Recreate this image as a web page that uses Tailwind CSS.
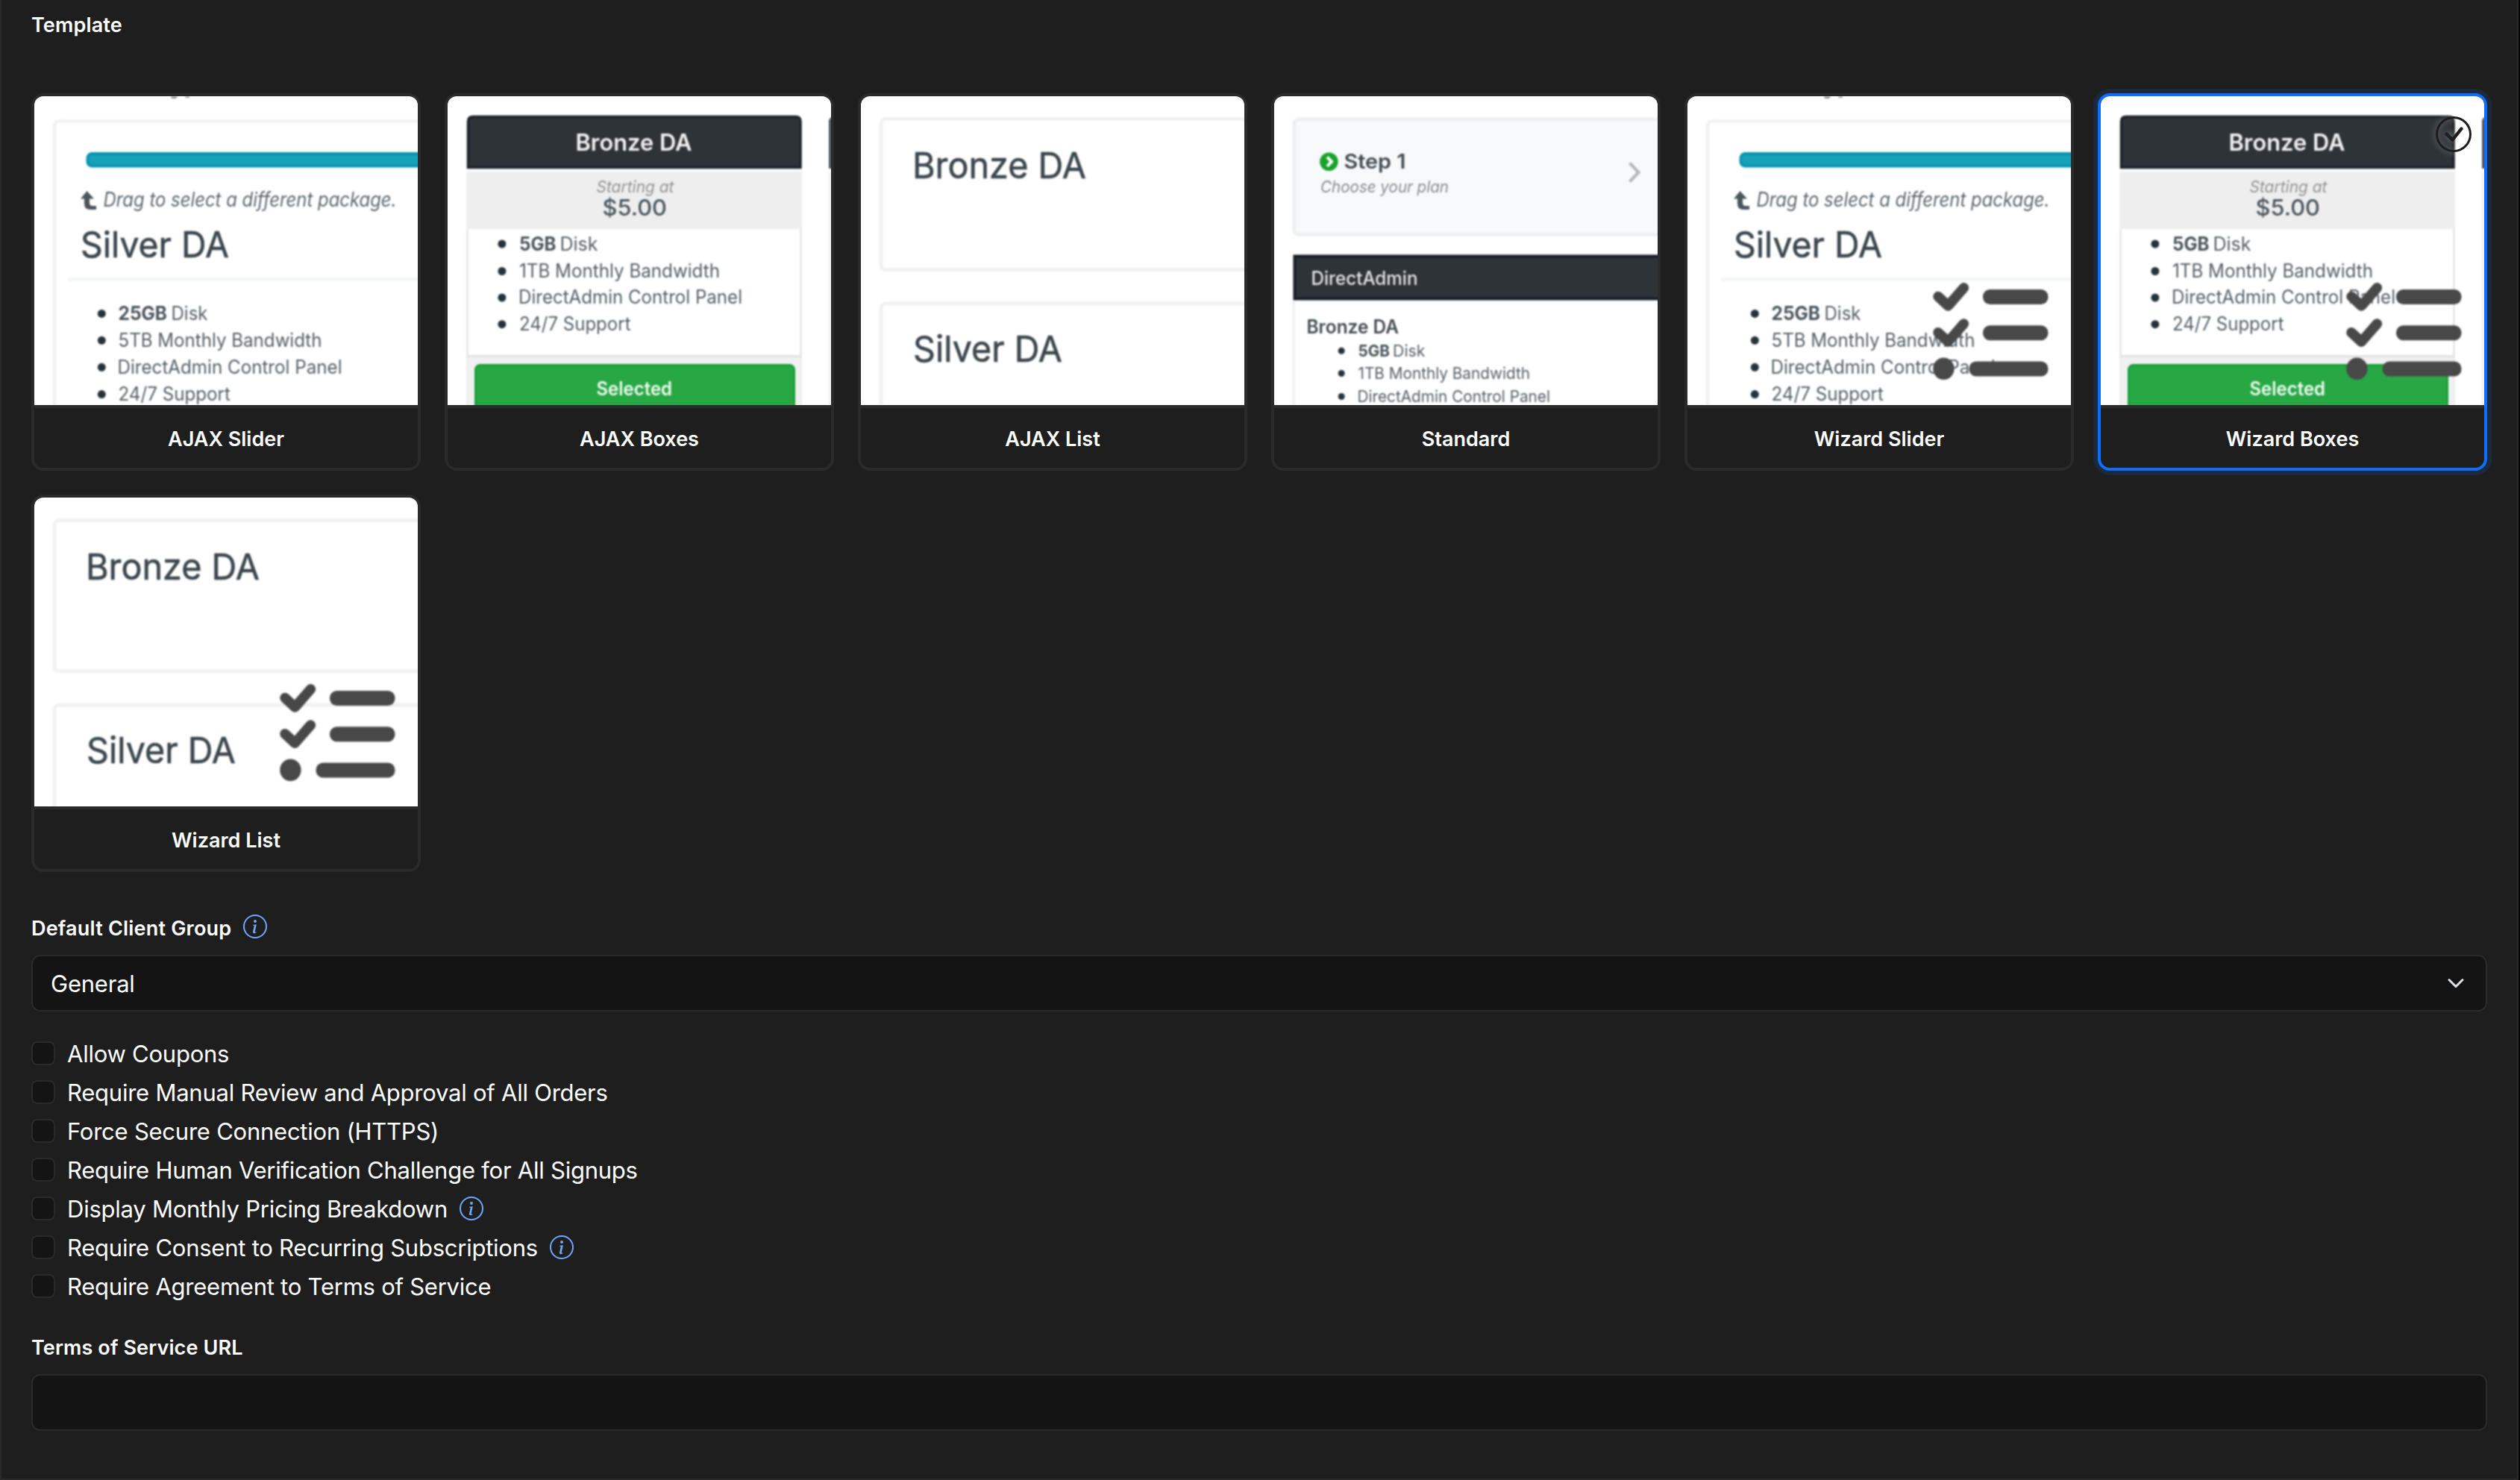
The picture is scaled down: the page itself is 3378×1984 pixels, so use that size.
<!DOCTYPE html>
<html lang="en">
<head>
    <meta charset="UTF-8">
    <meta name="viewport" content="width=device-width, initial-scale=1.0">
    <title>Order Form</title>
    <script src="https://cdn.jsdelivr.net/npm/@tailwindcss/browser@4"></script>
    <style>
        body {
            font-family: 'Inter', sans-serif;
        }
    </style>
</head>
<body class="bg-[#050505] text-white">
    <div class="w-[3376px] h-[1984px] px-10 pt-[13px] bg-[#1e1e1e] border-x-2 border-b-2 border-[#2a2a2a] overflow-hidden">
        <h2 class="text-[27px] leading-[42px] font-semibold tracking-[0.15px]">Template</h2>

        <div id="templates" class="grid grid-cols-6 gap-8 mt-[70px]"></div>

        <div class="flex items-center gap-4 mt-[55px] h-[42px]">
            <label for="group" class="text-[27px] leading-[42px] font-semibold tracking-[0.2px]">Default Client Group</label>
            <svg class="size-8 -mt-1.5 text-[#6ea8fe]" viewBox="0 0 16 16" fill="currentColor"><use href="#icon-info"/></svg>
        </div>
        <div id="group" class="flex items-center justify-between h-[76px] mt-3.5 pl-6 pr-[28px] rounded-xl border-2 border-[#2a2a2a] bg-[#141414]">
            <span class="pt-0.5 text-[31px] tracking-[-0.22px]">General</span>
            <svg class="size-6" viewBox="0 0 16 16" fill="none" stroke="#dee2e6" stroke-width="2" stroke-linecap="round" stroke-linejoin="round"><path d="m2 5 6 6 6-6"/></svg>
        </div>

        <div id="options" class="mt-[30px]"></div>

        <label for="tos" class="block mt-9 text-[27px] leading-[42px] font-semibold tracking-[0.12px]">Terms of Service URL</label>
        <input type="text" id="tos" class="block w-full h-[76px] mt-3.5 px-6 rounded-xl border-2 border-[#2a2a2a] bg-[#141414] text-[31px]">
    </div>

    <svg class="hidden">
        <symbol id="icon-info" viewBox="0 0 16 16">
            <path d="M8 15A7 7 0 1 1 8 1a7 7 0 0 1 0 14m0 1A8 8 0 1 0 8 0a8 8 0 0 0 0 16"/>
            <path d="m8.93 6.588-2.29.287-.082.38.45.083c.294.07.352.176.288.469l-.738 3.468c-.194.897.105 1.319.808 1.319.545 0 1.178-.252 1.465-.598l.088-.416c-.2.176-.492.246-.686.246-.275 0-.375-.193-.304-.533zM9 4.5a1 1 0 1 1-2 0 1 1 0 0 1 2 0"/>
        </symbol>
    </svg>

    <script>
        // one line of preview text, stretched to a fixed width
        const t = (x, y, w, size, text, extra = '') =>
            `<text x="${x}" y="${y}" font-size="${size}" textLength="${w}" lengthAdjust="spacingAndGlyphs" ${extra}>${text}</text>`;
        const dot = (x, y, r = 5.5) => `<circle cx="${x}" cy="${y}" r="${r}" fill="#26323a"/>`;

        const slider = `
            <path d="M183 0h9l-2 3h-6zM202 0h6v2h-5z" fill="#8b9398"/>
            <rect x="27" y="33.5" width="520" height="420" rx="6" fill="none" stroke="#f2f2f2" stroke-width="4.5"/>
            <rect x="71.5" y="77" width="480" height="16.5" rx="6" fill="#17a2b8" stroke="#0895b0" stroke-width="4"/>
            <path d="M62 137.5 70.5 127l9.5 10.5h-6V143q0 4 4 4h5v5h-8q-8 0-8-8v-6.5z" fill="#4a555c"/>
            ${t(92.5, 147.5, 393, 26.5, 'Drag to select a different package.', 'font-style="italic" fill="#5c676e"')}
            ${t(62, 216, 199, 48, 'Silver DA', 'fill="#3a454c" stroke="#3a454c" stroke-width=".6"')}
            <path d="M45 245.3h480" stroke="#f2f4f6" stroke-width="4.5"/>
            ${dot(90.3, 291.4)}${dot(90.3, 327.3)}${dot(90.3, 363.3)}${dot(90.3, 399.6)}
            ${t(112.5, 300, 65.5, 25.5, '25GB', 'font-weight="700" fill="#4a555c"')}
            ${t(183.5, 300, 49, 25.5, 'Disk')}
            ${t(112.5, 335.5, 273, 25.5, '5TB Monthly Bandwidth')}
            ${t(111.5, 371.5, 301, 25.5, 'DirectAdmin Control Panel')}
            ${t(112.5, 407.5, 150.5, 25.5, '24/7 Support')}`;

        const boxes = `
            <path d="M25 101h450v350H25z" fill="#eeeeee"/>
            <path d="M28 178h444v169H28z" fill="#fff"/>
            <path d="M25 178h3v169h-3zM472 178h3v169h-3z" fill="#e9e9eb"/>
            <path d="M26 347h448v3.5H26z" fill="#e4e4e6"/>
            <path d="M28 350.5h444v80H28z" fill="#f2f1f2"/>
            <path d="M25 97h450v4H25z" fill="#fff"/>
            <path d="M27.5 95.5V34q0-6.5 6.5-6.5h432.5q6.500 0 6.500 6.500v61.500z" fill="#2e3338" stroke="#1c232a" stroke-width="3.5"/>
            <path d="M511 97V32l3-4h20v69z" fill="#4c5359"/>
            <path d="M510.5 101h20v330h-20z" fill="#f3f3f4"/>
            ${t(171.5, 73.3, 156, 31.5, 'Bronze DA', 'font-weight="600" fill="#f1f1f1"')}
            ${t(199.5, 129, 104, 21.5, 'Starting at', 'font-style="italic" fill="#949494"')}
            ${t(207.5, 160, 86.5, 30.5, '$5.00', 'font-weight="500" fill="#4a555c"')}
            ${dot(72.9, 198)}${dot(72.9, 234.5)}${dot(72.9, 270)}${dot(72.9, 305.7)}
            ${t(96, 206.6, 49.5, 25, '5GB', 'font-weight="700" fill="#4a555c"')}
            ${t(150.5, 206.6, 51, 25, 'Disk')}
            ${t(96, 242.5, 269, 25, '1TB Monthly Bandwidth')}
            ${t(95, 278, 300, 25, 'DirectAdmin Control Panel')}
            ${t(96, 314.4, 149.5, 25, '24/7 Support')}
            <rect x="37.5" y="360.5" width="427" height="80" rx="6" fill="#28a745" stroke="#18a039" stroke-width="3"/>
            ${t(199.5, 400.8, 101.5, 25.5, 'Selected', 'font-weight="600" fill="#eefbef"')}`;

        const list = `
            <rect x="27" y="30.5" width="520" height="202" rx="6" fill="none" stroke="#f2f2f2" stroke-width="5"/>
            ${t(69, 109.6, 233, 48.5, 'Bronze DA', 'fill="#3a454c" stroke="#3a454c" stroke-width=".6"')}
            <rect x="27" y="278" width="520" height="202" rx="6" fill="none" stroke="#f2f2f2" stroke-width="5"/>
            ${t(70, 355.9, 200, 48.5, 'Silver DA', 'fill="#3a454c" stroke="#3a454c" stroke-width=".6"')}`;

        const standard = `
            <rect x="27" y="31" width="520" height="154.5" rx="6" fill="#f8f9fb" stroke="#eeeff1" stroke-width="5"/>
            <circle cx="73.4" cy="87.7" r="12.3" fill="#16a32a"/>
            <path d="m71 81.5 6 6.2-6 6.2" fill="none" stroke="#fff" stroke-width="4"/>
            ${t(93.5, 96.7, 83, 27.5, 'Step 1', 'font-weight="600" fill="#414b53"')}
            ${t(62, 129, 172, 22, 'Choose your plan', 'font-style="italic" fill="#878d92"')}
            <path d="m476.5 89.5 12 12.5-12 12.5" fill="none" stroke="#b5b7b9" stroke-width="4"/>
            <path d="M24.5 275h3.5v150h-3.5z" fill="#f0f1f3"/>
            <path d="M27.5 214.5h520v57h-520z" fill="#2e3338" stroke="#171e25" stroke-width="4"/>
            ${t(49.5, 253, 143, 25, 'DirectAdmin', 'font-weight="500" fill="#e6e6e6"')}
            ${t(43.5, 317.8, 123.5, 25, 'Bronze DA', 'font-weight="600" fill="#414b53"')}
            ${dot(90.2, 341.2, 4.5)}${dot(90.2, 371.5, 4.5)}${dot(90.2, 402.5, 4.5)}
            ${t(112.5, 348.5, 42.5, 22, '5GB', 'font-weight="700" fill="#4a555c"')}
            ${t(159, 348.5, 43.5, 22, 'Disk')}
            ${t(112.5, 379, 230.5, 22, '1TB Monthly Bandwidth')}
            ${t(111.5, 409.5, 258.5, 22, 'DirectAdmin Control Panel')}`;

        const wizard = `
            <g fill="none" stroke="#484848" stroke-width="13.5" stroke-linecap="round" stroke-linejoin="round">
                <path d="m336 268.5 13.4 12.5 21-24.2"/>
                <path d="m336 316.7 13.4 12.5 21-24.2"/>
            </g>
            <g fill="#484848">
                <rect x="396" y="259" width="87.5" height="20" rx="9.5"/>
                <rect x="396" y="307.3" width="87.5" height="20" rx="9.5"/>
                <rect x="377.5" y="355.5" width="106" height="20" rx="9.5"/>
                <ellipse cx="343.4" cy="365.3" rx="14.2" ry="14.8"/>
            </g>`;

        const templates = [
            { name: 'AJAX Slider', art: slider },
            { name: 'AJAX Boxes', art: boxes },
            { name: 'AJAX List', art: list },
            { name: 'Standard', art: standard },
            { name: 'Wizard Slider', art: slider + wizard },
            { name: 'Wizard Boxes', art: boxes + wizard, selected: true },
            { name: 'Wizard List', art: list + wizard },
        ];

        document.getElementById('templates').innerHTML = templates.map(item => `
            <div class="relative rounded-2xl border-4 ${item.selected ? 'border-[#0d6efd] ring-6 ring-[#0d6efd]/15' : 'border-[#2a2a2a]'}">
                <svg class="block w-full h-[414px] rounded-t-xl bg-white" viewBox="0 0 514 414" fill="#566168">
                    <g class="blur-[0.9px]">${item.art}</g>
                </svg>
                <div class="h-21 pt-px border-t-4 border-[#2a2a2a] text-center text-[27px] leading-[79px] font-semibold"><span class="inline-block pt-px">${item.name}</span></div>
                ${item.selected ? `
                <svg class="absolute top-[27px] right-[17px] size-12 drop-shadow-[0_0_4px_rgba(255,255,255,0.4)]" viewBox="0 0 16 16" fill="#1e1e1e">
                    <path d="M8 15A7 7 0 1 1 8 1a7 7 0 0 1 0 14m0 1A8 8 0 1 0 8 0a8 8 0 0 0 0 16"/>
                    <path d="m10.97 4.97-.02.022-3.473 4.425-2.093-2.094a.75.75 0 0 0-1.06 1.06L6.97 11.03a.75.75 0 0 0 1.079-.02l3.992-4.99a.75.75 0 0 0-1.071-1.05"/>
                </svg>` : ''}
            </div>`).join('');

        const options = [
            ['Allow Coupons'],
            ['Require Manual Review and Approval of All Orders'],
            ['Force Secure Connection (HTTPS)'],
            ['Require Human Verification Challenge for All Signups'],
            ['Display Monthly Pricing Breakdown', true],
            ['Require Consent to Recurring Subscriptions', true],
            ['Require Agreement to Terms of Service'],
        ];

        document.getElementById('options').innerHTML = options.map(([label, info]) => `
            <label class="flex items-center h-[52px]">
                <span class="size-8 rounded-lg border-2 border-[#2a2a2a] bg-[#141414]"></span>
                <span class="ml-4 pt-0.5 text-[31px] tracking-[-0.24px]">${label}</span>
                ${info ? '<svg class="size-8 ml-4 text-[#6ea8fe]" viewBox="0 0 16 16" fill="currentColor"><use href="#icon-info"/></svg>' : ''}
            </label>`).join('');
    </script>
</body>
</html>
